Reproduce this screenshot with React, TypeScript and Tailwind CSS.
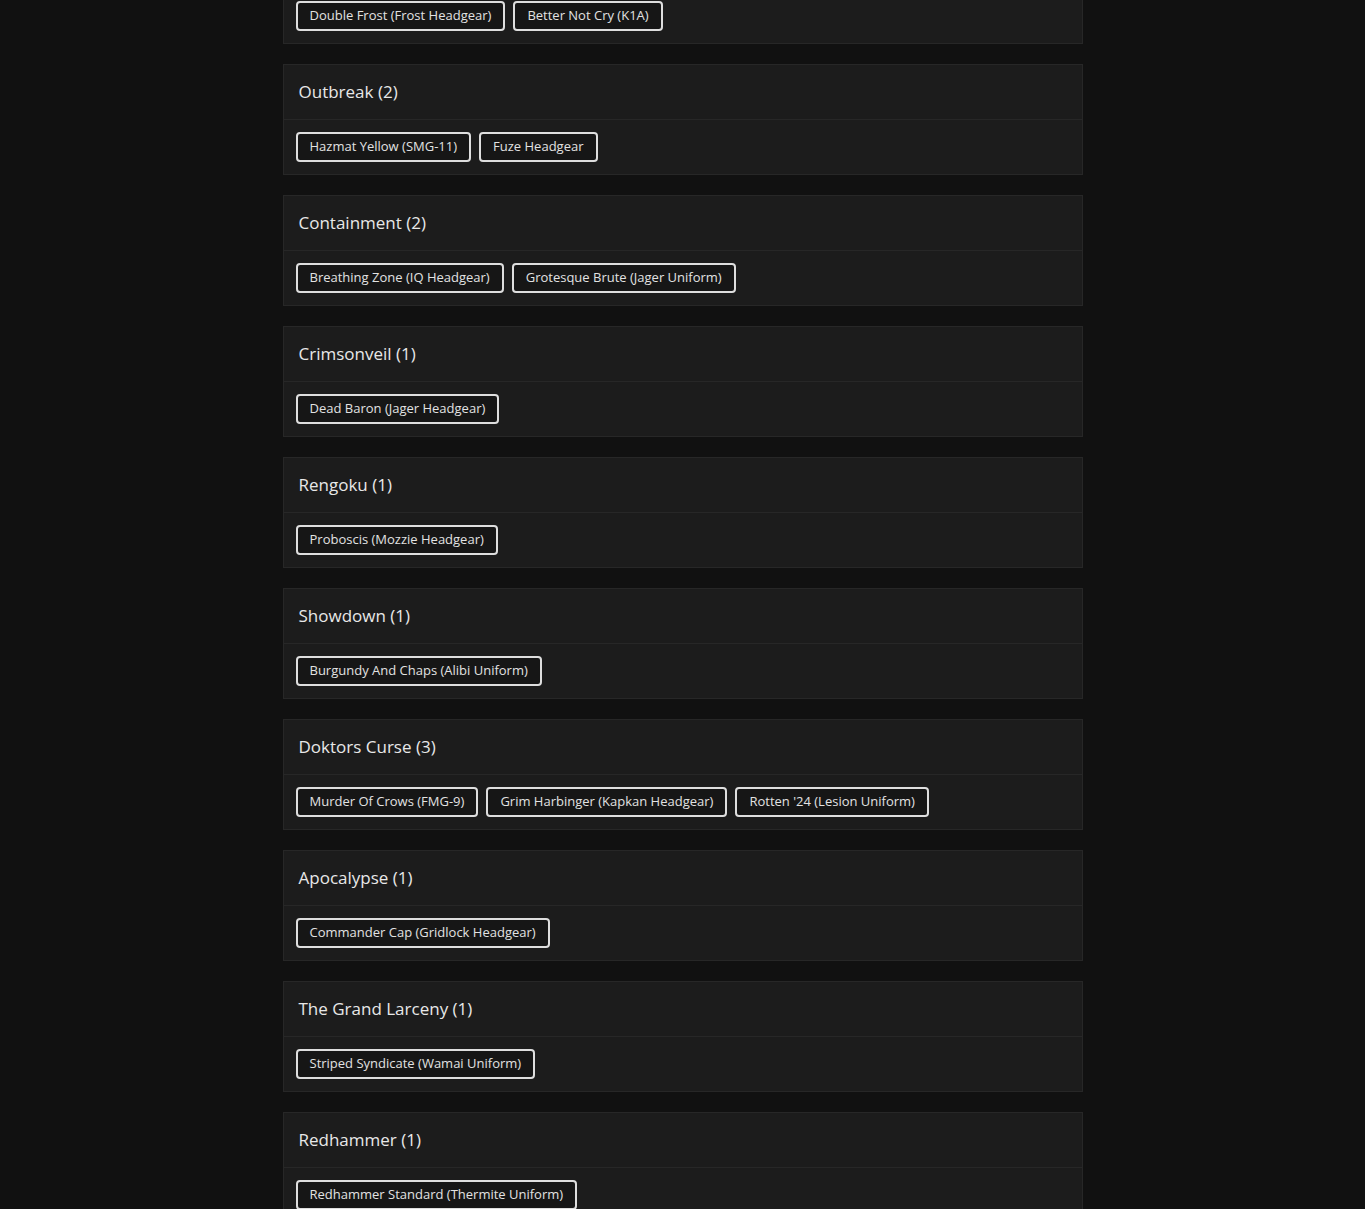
const collections = [
  { name: 'Snow Brawl', items: ['Double Frost (Frost Headgear)', 'Better Not Cry (K1A)'] },
  { name: 'Outbreak', items: ['Hazmat Yellow (SMG-11)', 'Fuze Headgear'] },
  { name: 'Containment', items: ['Breathing Zone (IQ Headgear)', 'Grotesque Brute (Jager Uniform)'] },
  { name: 'Crimsonveil', items: ['Dead Baron (Jager Headgear)'] },
  { name: 'Rengoku', items: ['Proboscis (Mozzie Headgear)'] },
  { name: 'Showdown', items: ['Burgundy And Chaps (Alibi Uniform)'] },
  {
    name: 'Doktors Curse',
    items: ['Murder Of Crows (FMG-9)', 'Grim Harbinger (Kapkan Headgear)', "Rotten '24 (Lesion Uniform)"],
  },
  { name: 'Apocalypse', items: ['Commander Cap (Gridlock Headgear)'] },
  { name: 'The Grand Larceny', items: ['Striped Syndicate (Wamai Uniform)'] },
  { name: 'Redhammer', items: ['Redhammer Standard (Thermite Uniform)'] },
];

function CollectionCard({ name, items }: { name: string; items: string[] }) {
  return (
    <section className="border border-[#272727] bg-[#1c1c1c]">
      <header className="h-[55px] flex items-center px-[15px] border-b border-[#272727]">
        <h2 className="text-[17px] font-medium text-[#e8e8e8]">
          {name} ({items.length})
        </h2>
      </header>
      <div className="h-[54px] flex items-center gap-2 px-3">
        {items.map(item => (
          <button
            key={item}
            className="h-[30px] px-3 border-2 border-[#dedede] rounded-[4px] bg-[#161616] text-[13px] text-[#e2e2e2] whitespace-nowrap"
          >
            {item}
          </button>
        ))}
      </div>
    </section>
  );
}

export default function App() {
  return (
    <div
      className="h-[1209px] overflow-hidden bg-[#111111]"
      style={{ fontFamily: '"Open Sans", "Liberation Sans", sans-serif' }}
    >
      <div className="w-[800px] mx-auto -mt-[67px] flex flex-col gap-5">
        {collections.map(c => (
          <CollectionCard key={c.name} name={c.name} items={c.items} />
        ))}
      </div>
    </div>
  );
}
